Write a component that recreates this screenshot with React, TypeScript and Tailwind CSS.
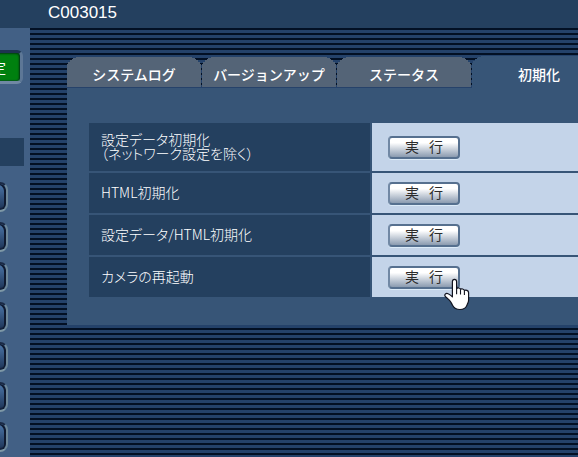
import clsx from 'clsx'

const tabs = ['システムログ', 'バージョンアップ', 'ステータス', '初期化']

const rows = [
  { id: 'data', lines: ['設定データ初期化', '（ネットワーク設定を除く）'] },
  { id: 'html', lines: ['HTML初期化'] },
  { id: 'data-html', lines: ['設定データ/HTML初期化'] },
  { id: 'reboot', lines: ['カメラの再起動'] },
]

const menu = ['ライブ画', '基本', 'カメラ', '画質', 'ネットワーク', 'スケジュール', 'メンテナンス']

function HandCursor() {
  return (
    <svg
      className="pointer-events-none absolute left-14 top-3 z-10"
      width="26"
      height="33"
      viewBox="0 0 26 33"
      aria-hidden="true"
    >
      <path
        d="M8.4 3.6C8.4 2.2 9.2 1.3 10.5 1.3s2.1.9 2.1 2.3v6.9c.8-.9 3.4-.7 3.9.8 1-.8 3.4-.4 3.9 1.1 1.3-.7 4.2-.1 4.2 2.3v7.2c0 2.3-1 3.6-1.6 5.2-.9 2.6-3.2 4.4-7.1 4.4-3.6 0-5.9-1.6-7.4-4.3-1.1-2-1.6-3.5-3.4-5.3l-3.5-3.1c-1.9-1.8.2-4.2 2.6-3 1.7.8 2.9 1.7 4.2 3.1z"
        fill="#fff"
        stroke="#11131f"
        strokeWidth="1.2"
        strokeLinejoin="round"
      />
      <path d="M12.6 10.5v5.7M16.5 11.5v5.1M20.4 12.6v4.4" stroke="#11131f" strokeWidth="1.1" fill="none" />
    </svg>
  )
}

function Sidebar() {
  return (
    <nav className="flex w-[30px] shrink-0 flex-col items-end overflow-hidden bg-[#426085]">
      <button className="mr-[7px] mt-[22px] h-[34px] w-24 shrink-0 rounded-md border-y-[3px] border-r-[3px] border-b-[#7088a4] border-r-[#5d7796] border-t-[#1e3350] bg-[#00800f] pr-[14px] text-right text-[14px] leading-[14px] shadow-[inset_-1px_1px_2px_#003b10,inset_-1px_-1px_1px_#05601a]">
        設定
      </button>
      <div className="mr-1.5 mt-[54px] h-7 w-24 shrink-0 bg-[#24405f]" />
      <ul className="mr-[22px] mt-4 flex flex-col gap-[10px]">
        {menu.map(name => (
          <li key={name} className="h-[30px]">
            <button
              aria-label={name}
              className="block h-[30px] w-24 rounded-lg border-2 border-b-[#7e98a6] border-r-[#6d8799] border-t-[#1b2a45] bg-linear-to-b from-[#4c76a8] to-[#1d3355] shadow-[inset_-2px_1px_0_#0f1a30,inset_0_-2px_1px_#14233d]"
            />
          </li>
        ))}
      </ul>
    </nav>
  )
}

function Tabs({ active }: { active: string }) {
  return (
    <div role="tablist" className="flex items-end gap-px">
      {tabs.map(tab => (
        <button
          key={tab}
          role="tab"
          aria-selected={tab === active}
          className={clsx(
            'w-[134px] shrink-0 text-[14px] font-medium leading-5',
            '[clip-path:polygon(0_100%,0_7px,1px_7px,1px_5px,3px_5px,3px_3px,5px_3px,5px_2px,6px_2px,6px_1px,9px_1px,9px_0,calc(100%_-_9px)_0,calc(100%_-_9px)_1px,calc(100%_-_6px)_1px,calc(100%_-_6px)_2px,calc(100%_-_5px)_2px,calc(100%_-_5px)_3px,calc(100%_-_3px)_3px,calc(100%_-_3px)_5px,calc(100%_-_1px)_5px,calc(100%_-_1px)_7px,100%_7px,100%_100%)]',
            tab === active ? 'h-8 bg-[#375577] pt-1 font-bold' : 'h-[31px] border-b border-[#26426a] bg-[#546477] pt-1',
          )}
        >
          {tab}
        </button>
      ))}
    </div>
  )
}

export default function App() {
  return (
    <div className="flex min-h-screen flex-col overflow-hidden bg-[#24405f] font-['Noto_Sans_CJK_JP',sans-serif] text-white">
      <header className="h-7 pl-12">
        <h1 className="font-['Liberation_Sans',sans-serif] text-[17px] leading-[26px]">C003015</h1>
      </header>
      <div className="flex grow">
        <Sidebar />
        <main className="min-w-0 grow overflow-hidden bg-[repeating-linear-gradient(#021024_0_2px,#24426a_2px_5px)] pl-[37px] pt-7">
          <Tabs active="初期化" />
          <section className="bg-[#375577] pb-[26px] pl-5 pt-[33px]">
            <div className="-mr-0.5">
              <table className="w-full border-separate border-spacing-0.5">
                <tbody>
                  {rows.map(row => (
                    <tr key={row.id} className={row.lines.length > 1 ? 'h-12' : 'h-10'}>
                      <th
                        scope="row"
                        className="w-[281px] bg-[#24405f] pb-0.5 pl-3 pt-0 text-left text-[14px] font-light leading-[14px] [font-feature-settings:'palt']"
                      >
                        {row.lines.map(line => (
                          <div key={line}>{line}</div>
                        ))}
                      </th>
                      <td className="bg-[#c4d4e9] py-0 pl-4">
                        <div className="relative w-[72px]">
                          <button className="block h-[23px] w-full rounded border-2 border-[#56708f] border-l-[#7188a4] bg-linear-to-b from-white from-25% to-[#8b9bb0] pb-0.5 text-[14px] leading-4 text-[#2b2b2b] shadow-[0_1px_0_#dcebf8]">
                            実&ensp;&thinsp;行
                          </button>
                          {row.id === 'reboot' && <HandCursor />}
                        </div>
                      </td>
                    </tr>
                  ))}
                </tbody>
              </table>
            </div>
          </section>
        </main>
      </div>
    </div>
  )
}
